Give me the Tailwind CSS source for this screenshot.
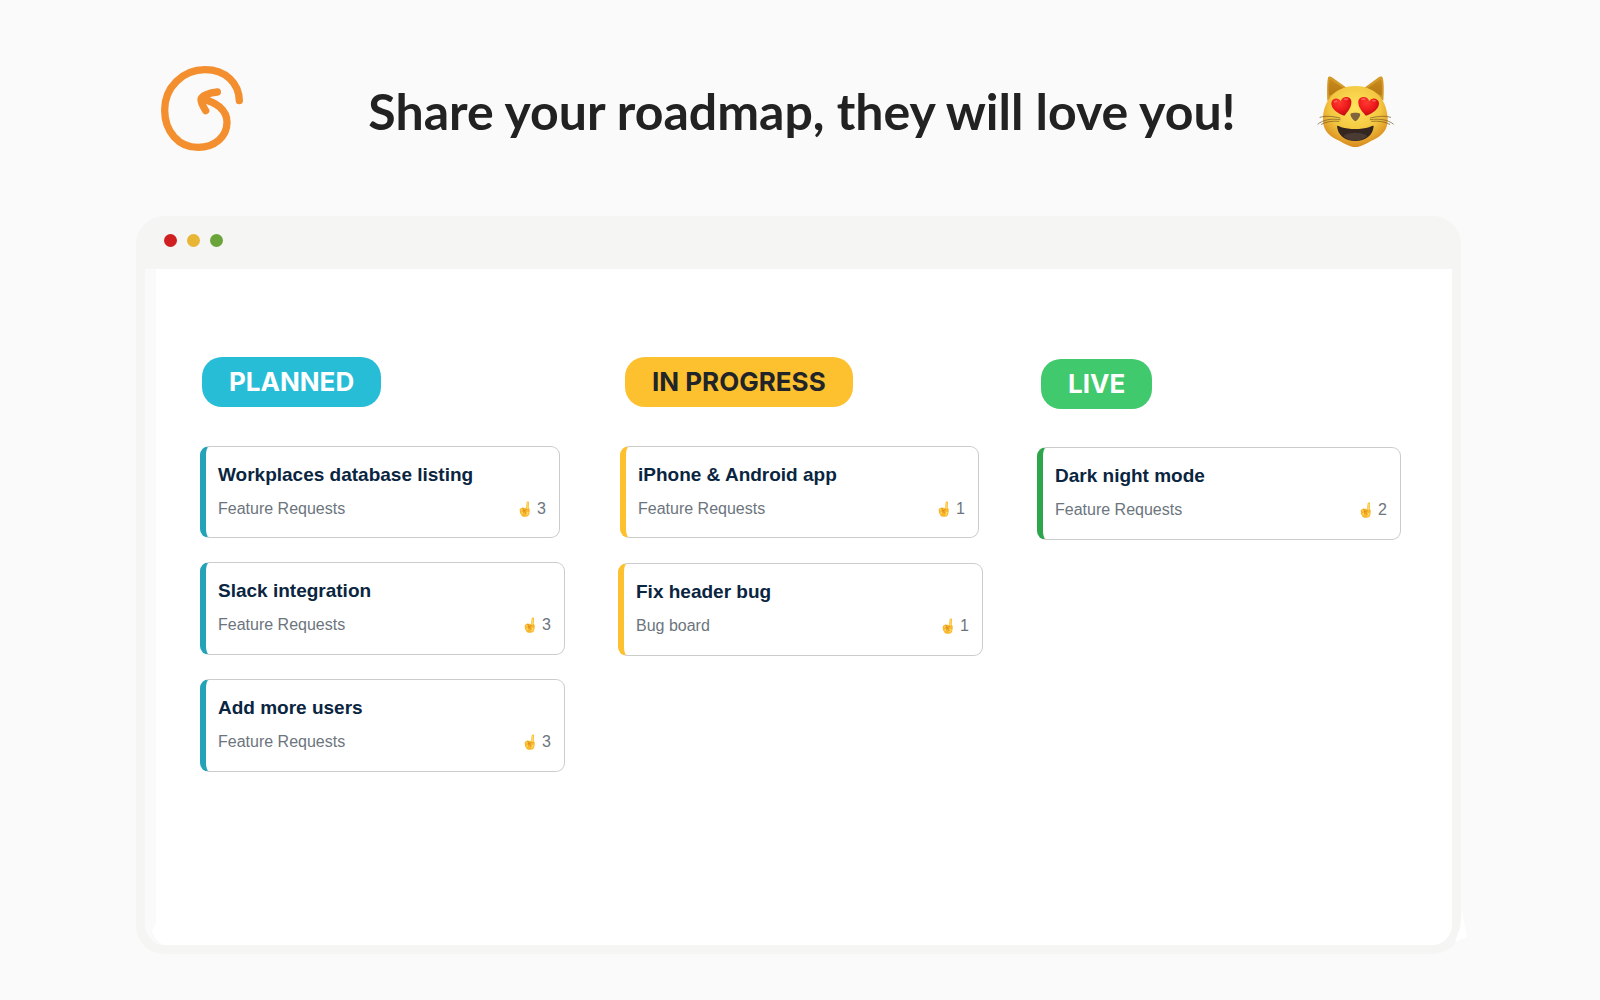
<!DOCTYPE html>
<html lang="en">
<head>
    <meta charset="UTF-8">
    <meta name="viewport" content="width=device-width, initial-scale=1.0">
    <title>Share your roadmap</title>
    <script src="https://cdn.jsdelivr.net/npm/@tailwindcss/browser@4"></script>
</head>
<body class="bg-[#fafafa] min-h-screen font-['Liberation_Sans',sans-serif]">
    <!-- Shared icons -->
    <svg class="hidden">
        <symbol id="finger" viewBox="0 0 36 48">
            <path fill="#f9b62e" d="M23 5c1-5 7-4 7 0l-1 16c3 2 4 5 3 9l-1 8c-1 6-5 9-11 9h-6c-5 0-7-3-8-7-3-2-4-5-3-8-2-4-1-9 3-10 3-3 6-3 8-1 3-2 6-1 7 1z"/>
            <path fill="#ffd95a" d="M24 6c1-3 4-3 4 0l-1 17-5 1zM7 24c2-2 5-1 5 1l-1 4-5-1zM8 33c2-1 4 0 4 2l-1 4-4-1zM22 33c4-2 7-1 7 3-1 5-4 7-8 7z"/>
            <path fill="none" stroke="#cc7a14" stroke-width="2" stroke-linecap="round" stroke-linejoin="round" d="M12 22l1 8 9-4M14 33c4-2 7 0 8 4"/>
        </symbol>
    </svg>

    <!-- Header -->
    <header class="flex items-center px-40 pt-16 pb-16">
        <svg class="w-[84px] h-[88px] shrink-0" viewBox="60 42 252 264" role="img" aria-label="Logo">
            <g fill="none" stroke="#f38f2f" stroke-width="22" stroke-linecap="round" stroke-linejoin="round">
                <path d="M298 152C297 100 257 59 195 59C128 59 74 112 74 180C74 246 117 292 174 292C224 292 261 260 261 217C261 181 228 154 186 148"/>
                <path d="M232 126C208 128 184 137 183 148C182 157 189 169 197 182"/>
                <path d="M190 147L200 143"/>
            </g>
        </svg>
        <h1 class="flex-1 pl-11 pt-1.5 text-center text-[50px] leading-[60px] font-bold text-[#222] font-['Lato',sans-serif]">Share your roadmap, they will love you!</h1>
        <svg class="mt-1.5 mr-11 w-20 h-[75px] shrink-0" viewBox="45 40 240 225" role="img" aria-label="Cat with heart eyes">
            <defs>
                <radialGradient id="face" cx="0.5" cy="0.35" r="0.65">
                    <stop offset="0" stop-color="#ffe45c"/>
                    <stop offset="0.6" stop-color="#f3c740"/>
                    <stop offset="1" stop-color="#d88a1e"/>
                </radialGradient>
                <linearGradient id="ear" x1="0" y1="0" x2="0" y2="1">
                    <stop offset="0" stop-color="#c98a1c"/>
                    <stop offset="1" stop-color="#b57914"/>
                </linearGradient>
                <radialGradient id="heart" cx="0.4" cy="0.3" r="0.75">
                    <stop offset="0" stop-color="#ff3a30"/>
                    <stop offset="0.55" stop-color="#ee1a1c"/>
                    <stop offset="1" stop-color="#b80a12"/>
                </radialGradient>
            </defs>
            <path fill="#d39a28" d="M79 120C78 90 78 66 81 51C83 46 89 47 95 51L142 85ZM247 120C249 90 249 66 245 51C243 46 237 47 231 51L185 85Z"/>
            <path fill="url(#ear)" d="M84 105C82 78 83 62 87 56L130 84ZM242 105C244 78 243 62 239 56L197 84Z"/>
            <path fill="url(#face)" d="M163 76C222 76 257 117 260 171C262 205 246 223 218 237C196 248 179 259 163 259C147 259 130 248 108 237C80 223 64 205 66 171C69 117 104 76 163 76Z"/>
            <g fill="url(#heart)">
                <path d="M130 165C108 158 90 143 91 127C92 113 112 108 119 122C123 105 149 105 151 121C153 138 140 154 130 165Z"/>
                <path d="M195 165C184 154 170 138 172 121C175 105 201 105 205 122C212 108 232 113 234 127C235 143 217 158 195 165Z"/>
            </g>
            <g fill="#ff9a88" opacity="0.5">
                <ellipse cx="104" cy="122" rx="6" ry="3" transform="rotate(-25 104 122)"/>
                <ellipse cx="135" cy="116" rx="7" ry="3"/>
                <ellipse cx="187" cy="116" rx="7" ry="3"/>
                <ellipse cx="219" cy="120" rx="6" ry="3"/>
            </g>
            <path fill="#80643d" d="M149 159C153 155 173 155 177 159C180 165 170 178 163 182C156 178 146 165 149 159Z"/>
            <path fill="#342520" d="M108 196C110 194 116 198 121 200C145 207 181 207 204 200C210 198 217 193 218 197C216 225 193 241 163 241C132 241 110 224 108 196Z"/>
            <path fill="#4a3a34" d="M127 226C145 213 181 213 199 226C179 244 146 244 127 226Z"/>
            <g fill="none" stroke="#6f5524" stroke-width="2" stroke-linecap="round">
                <path d="M117 172C93 166 72 165 57 170M117 177C91 173 67 177 51 190M114 182C95 180 74 183 61 191"/>
                <path d="M208 172C233 166 254 165 269 170M208 177C236 173 260 177 277 190M212 182C233 180 253 183 266 191"/>
            </g>
        </svg>
    </header>

    <!-- Browser window -->
    <main class="relative ml-[136px] mr-[139px] rounded-[28px] bg-[#f5f5f3] pb-[9px]">
        <svg class="absolute -right-1.5 bottom-3 w-3 h-8" viewBox="0 0 12 32" aria-hidden="true">
            <path fill="#fff" d="M7 0L12 27L0 32L5 18Z"/>
        </svg>
        <div class="flex h-[53px] items-start gap-2.5 pl-7 pt-[18px]">
            <span class="size-[13px] rounded-full bg-[#cf1f20]"></span>
            <span class="size-[13px] rounded-full bg-[#e9b535]"></span>
            <span class="size-[13px] rounded-full bg-[#6ba53a]"></span>
        </div>
        <div class="relative mx-[9px] min-h-[676px] rounded-b-[20px] border-l-[11px] border-[#fafafa] bg-white pl-11 pr-[51px] pt-[88px]">
            <svg class="absolute -left-1 bottom-0 h-6 w-4" viewBox="0 0 16 24" aria-hidden="true">
                <path fill="#fff" d="M4 2L0 10C2 17 7 22 14 24H16V2Z"/>
            </svg>
            <div class="grid grid-cols-3 gap-[53px]">
                <section>
                    <h2 class="ml-0.5 w-fit rounded-[20px] bg-[#28bdd7] px-[27px] text-[26px] leading-[50px] font-bold text-white font-['Inter',sans-serif]">PLANNED</h2>
                    <div class="mt-[39px] flex flex-col gap-6">
                        <article class="mr-[5px] rounded-[9px] border border-l-[6px] border-[#ccc] border-l-[#23a2b8] pl-3 pr-[13px] py-4">
                            <h3 class="text-[19px] leading-6 font-bold text-[#0a2540]">Workplaces database listing</h3>
                            <div class="mt-2.5 flex items-center justify-between text-base text-[#6c757d]">
                                <p>Feature Requests</p>
                                <p class="flex items-center gap-1.5"><svg class="w-3 h-4"><use href="#finger"/></svg>3</p>
                            </div>
                        </article>
                        <article class="rounded-[9px] border border-l-[6px] border-[#ccc] border-l-[#23a2b8] pl-3 pr-[13px] pt-4 pb-[17px]">
                            <h3 class="text-[19px] leading-6 font-bold text-[#0a2540]">Slack integration</h3>
                            <div class="mt-2.5 flex items-center justify-between text-base text-[#6c757d]">
                                <p>Feature Requests</p>
                                <p class="flex items-center gap-1.5"><svg class="w-3 h-4"><use href="#finger"/></svg>3</p>
                            </div>
                        </article>
                        <article class="rounded-[9px] border border-l-[6px] border-[#ccc] border-l-[#23a2b8] pl-3 pr-[13px] pt-4 pb-[17px]">
                            <h3 class="text-[19px] leading-6 font-bold text-[#0a2540]">Add more users</h3>
                            <div class="mt-2.5 flex items-center justify-between text-base text-[#6c757d]">
                                <p>Feature Requests</p>
                                <p class="flex items-center gap-1.5"><svg class="w-3 h-4"><use href="#finger"/></svg>3</p>
                            </div>
                        </article>
                    </div>
                </section>
                <section>
                    <h2 class="ml-[7px] w-fit rounded-[20px] bg-[#fdc02f] px-[27px] text-[26px] leading-[50px] font-bold text-[#212529] font-['Inter',sans-serif]">IN PROGRESS</h2>
                    <div class="mt-[39px] flex flex-col gap-[25px]">
                        <article class="ml-0.5 mr-1 rounded-[9px] border border-l-[6px] border-[#ccc] border-l-[#fdc02f] pl-3 pr-[13px] py-4">
                            <h3 class="text-[19px] leading-6 font-bold text-[#0a2540]">iPhone &amp; Android app</h3>
                            <div class="mt-2.5 flex items-center justify-between text-base text-[#6c757d]">
                                <p>Feature Requests</p>
                                <p class="flex items-center gap-1.5"><svg class="w-3 h-4"><use href="#finger"/></svg>1</p>
                            </div>
                        </article>
                        <article class="rounded-[9px] border border-l-[6px] border-[#ccc] border-l-[#fdc02f] pl-3 pr-[13px] pt-4 pb-[17px]">
                            <h3 class="text-[19px] leading-6 font-bold text-[#0a2540]">Fix header bug</h3>
                            <div class="mt-2.5 flex items-center justify-between text-base text-[#6c757d]">
                                <p>Bug board</p>
                                <p class="flex items-center gap-1.5"><svg class="w-3 h-4"><use href="#finger"/></svg>1</p>
                            </div>
                        </article>
                    </div>
                </section>
                <section class="pl-px pt-0.5">
                    <h2 class="ml-1 w-fit rounded-[20px] bg-[#40c96d] px-[27px] text-[26px] leading-[50px] font-bold text-white font-['Inter',sans-serif]">LIVE</h2>
                    <div class="mt-[38px] flex flex-col gap-6">
                        <article class="rounded-[9px] border border-l-[6px] border-[#ccc] border-l-[#2da54a] pl-3 pr-[13px] pt-4 pb-[17px]">
                            <h3 class="text-[19px] leading-6 font-bold text-[#0a2540]">Dark night mode</h3>
                            <div class="mt-2.5 flex items-center justify-between text-base text-[#6c757d]">
                                <p>Feature Requests</p>
                                <p class="flex items-center gap-1.5"><svg class="w-3 h-4"><use href="#finger"/></svg>2</p>
                            </div>
                        </article>
                    </div>
                </section>
            </div>
        </div>
    </main>
</body>
</html>
